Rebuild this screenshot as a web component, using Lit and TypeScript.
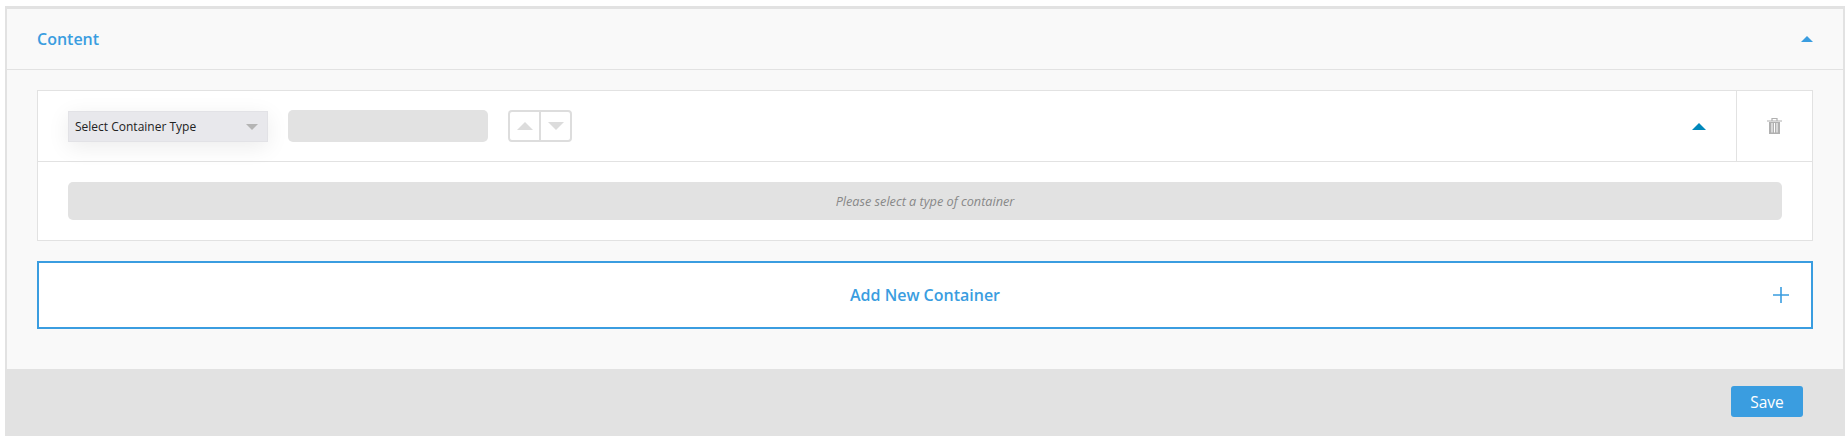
import { LitElement, html, css } from "lit";
import { customElement } from "lit/decorators.js";

@customElement("app-root")
export class AppRoot extends LitElement {
  static styles = css`
    :host { display: block; box-sizing: border-box; height: 438px; padding: 6px 3px 2px 5px; background: #fff; font-family: "Open Sans", sans-serif; }
    * { box-sizing: border-box; }
    .panel { background: #f9f9f9; border: 2px solid #e2e2e2; border-top-width: 3px; border-bottom: 0; }
    .head { height: 61px; border-bottom: 1px solid #e2e2e2; display: flex; align-items: center; justify-content: space-between; padding: 0 30px 0 30px; }
    .title { font-size: 16px; font-weight: 600; color: #3a9de0; }
    .head svg { display: block; margin-top: -1px; }
    .body { padding: 20px 30px 40px; display: flex; flex-direction: column; gap: 20px; }
    .card { background: #fff; border: 1px solid #e2e2e2; height: 151px; }
    .row { height: 71px; border-bottom: 1px solid #e2e2e2; display: flex; align-items: stretch; }
    .left { flex: 1; display: flex; align-items: center; gap: 20px; padding: 0 30px; }
    .select { width: 200px; height: 31px; margin-top: 1px; background: #e8e8ec; border: 1px solid #e2e2e6; box-shadow: 0 5px 22px rgba(0, 0, 0, 0.08); display: flex; align-items: center; justify-content: space-between; padding: 0 9px 0 6px; font-size: 12px; color: #222; }
    .input { width: 200px; height: 32px; background: #e2e2e2; border-radius: 5px; }
    .arrows { width: 64px; height: 32px; border: 2px solid #ddd; border-radius: 4px; display: flex; }
    .arrows span { flex: 1; display: flex; align-items: center; justify-content: center; }
    .arrows span + span { border-left: 2px solid #ddd; }
    .toggle { margin-right: 30px; display: flex; align-items: center; }
    .del { width: 76px; border-left: 1px solid #e2e2e2; display: flex; align-items: center; justify-content: center; padding-right: 1px; }
    .cbody { padding: 20px 30px; }
    .bar { height: 38px; background: #e2e2e2; border-radius: 5px; display: flex; align-items: center; justify-content: center; font-size: 12.7px; font-style: italic; color: #888; }
    .add { position: relative; height: 68px; background: #fff; border: 2px solid #3a9de0; display: flex; align-items: center; justify-content: center; font-size: 16px; font-weight: 600; color: #3a9de0; }
    .plus { position: absolute; right: 22px; top: 24px; display: block; }
    .foot { height: 67px; background: #e2e2e2; margin-right: 0; padding: 17px 42px 0 0; display: flex; justify-content: flex-end; align-items: flex-start; }
    .save { width: 72px; height: 31px; background: #3a9de0; border: 0; border-radius: 3px; color: #fff; font: 400 15.500px "Open Sans", sans-serif; padding: 0; display: flex; align-items: center; justify-content: center; }
  `;

  render() {
    return html`
      <div class="panel">
        <div class="head">
          <span class="title">Content</span>
          <svg width="12" height="6" viewBox="0 0 12 6"><polygon points="6,0 12,6 0,6" fill="#3a9de0"/></svg>
        </div>
        <div class="body">
          <div class="card">
            <div class="row">
              <div class="left">
                <div class="select">
                  <span>Select Container Type</span>
                  <svg width="12" height="6" viewBox="0 0 12 6"><polygon points="0,0 12,0 6,6" fill="#b4b4b4"/></svg>
                </div>
                <div class="input"></div>
                <div class="arrows">
                  <span><svg width="16" height="8" viewBox="0 0 16 8"><polygon points="8,0 16,8 0,8" fill="#dcdcdc"/></svg></span>
                  <span><svg width="16" height="8" viewBox="0 0 16 8"><polygon points="0,0 16,0 8,8" fill="#dcdcdc"/></svg></span>
                </div>
              </div>
              <div class="toggle">
                <svg width="14" height="7" viewBox="0 0 14 7"><polygon points="7,0 14,7 0,7" fill="#0088bb"/></svg>
              </div>
              <div class="del">
                <svg width="15" height="16" viewBox="0 0 15 16">
                  <path d="M5 2.500V.5h5v2M0 3h15" fill="none" stroke="#b0b0b0" stroke-width="1.2"/>
                  <path d="M2 4h11v12H2zM4.500 5v9.500h1V5zM7 5v9.500h1V5zM9.500 5v9.500h1V5z" fill="#b0b0b0" fill-rule="evenodd"/>
                </svg>
              </div>
            </div>
            <div class="cbody"><div class="bar">Please select a type of container</div></div>
          </div>
          <div class="add">
            Add New Container
            <svg class="plus" width="16" height="16" viewBox="0 0 16 16"><path d="M0 8h16M8 0v16" stroke="#3a9de0" stroke-width="1.6" fill="none"/></svg>
          </div>
        </div>
      </div>
      <div class="foot"><button class="save">Save</button></div>
    `;
  }
}
